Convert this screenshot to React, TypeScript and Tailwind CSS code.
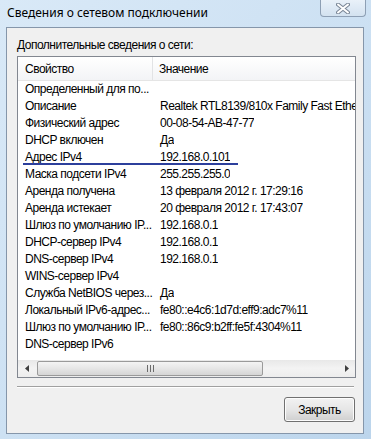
import React from "react";

const rows: [string, string][] = [
  ["Определенный для по...", ""],
  ["Описание", "Realtek RTL8139/810x Family Fast Ethernet NIC"],
  ["Физический адрес", "00-08-54-AB-47-77"],
  ["DHCP включен", "Да"],
  ["Адрес IPv4", "192.168.0.101"],
  ["Маска подсети IPv4", "255.255.255.0"],
  ["Аренда получена", "13 февраля 2012 г. 17:29:16"],
  ["Аренда истекает", "20 февраля 2012 г. 17:43:07"],
  ["Шлюз по умолчанию IP...", "192.168.0.1"],
  ["DHCP-сервер IPv4", "192.168.0.1"],
  ["DNS-сервер IPv4", "192.168.0.1"],
  ["WINS-сервер IPv4", ""],
  ["Служба NetBIOS через...", "Да"],
  ["Локальный IPv6-адрес...", "fe80::e4c6:1d7d:eff9:adc7%11"],
  ["Шлюз по умолчанию IP...", "fe80::86c9:b2ff:fe5f:4304%11"],
  ["DNS-сервер IPv6", ""],
];

const ui = { fontFamily: '"Liberation Sans", Arial, sans-serif' };

export default function App() {
  return (
    <div
      className="w-[371px] h-[439px] overflow-hidden flex flex-col bg-gradient-to-br from-[#d9e9f7] via-[#cde1f3] to-[#bcd5ec] text-[#1a1a1a]"
      style={ui}
    >
      {/* title bar */}
      <div className="h-[27px] flex items-start shrink-0">
        <div
          className="pl-[7px] pt-[4px] text-[12px] leading-[17px] text-black"
          style={{ fontFamily: '"Noto Sans", sans-serif' }}
        >
          Сведения о сетевом подключении
        </div>
        <div className="ml-auto mr-[5px] w-[46px] h-[17px] rounded-b-[4px] border border-t-0 border-[#8d9fb4] bg-gradient-to-b from-[#e9f1f9] to-[#d3e2f0] flex items-center justify-center">
          <svg width="14" height="11" viewBox="0 0 14 11">
            <path d="M2 1.5 L12 9.5 M12 1.5 L2 9.5" stroke="#7a8797" strokeWidth="4" strokeLinecap="round" />
            <path d="M2 1.5 L12 9.5 M12 1.5 L2 9.5" stroke="#ffffff" strokeWidth="2" strokeLinecap="round" />
          </svg>
        </div>
      </div>

      {/* client area */}
      <div className="ml-[6px] w-[358px] h-[407px] border border-[#8596aa] bg-[#f0f0f0] flex flex-col shrink-0 tracking-[-0.5px]">
        <div className="pl-[10px] pt-[9px] text-[12px] leading-[16px] text-black">
          Дополнительные сведения о сети:
        </div>
        <div className="ml-[10px] mt-[3px] w-[339px] h-[322px] border border-[#828790] bg-white flex flex-col overflow-hidden">
          {/* header */}
          <div className="h-[24px] shrink-0 flex border-b border-[#e5e5e5] bg-gradient-to-b from-white to-[#f3f4f6] text-[12px] text-black">
            <div className="w-[135px] shrink-0 pl-[7px] flex items-center border-r border-[#e2e3e5]">Свойство</div>
            <div className="pl-[6px] flex items-center">Значение</div>
          </div>
          {/* rows */}
          <div className="flex flex-col h-[279px] shrink-0">
            {rows.map(([k, v], i) => (
              <div key={i} className="relative h-[17px] flex items-center text-[12px] leading-[17px] text-black whitespace-nowrap">
                <div className="w-[135px] shrink-0 pl-[7px] overflow-hidden">{k}</div>
                <div className="pl-[7px] overflow-hidden">{v}</div>
                {i === 4 && (
                  <div className="absolute left-[5px] top-[14px] w-[215px] h-[2px] bg-[#2c3f9c]" />
                )}
              </div>
            ))}
          </div>
          {/* scrollbar */}
          <div className="h-[17px] shrink-0 flex bg-gradient-to-b from-[#e8e8e8] via-[#f3f3f3] to-[#ededed]">
            <div className="w-[17px] flex items-center justify-center">
              <svg width="4" height="7" viewBox="0 0 4 7"><path d="M4 0 L0 3.5 L4 7 Z" fill="#404040" /></svg>
            </div>
            <div className="w-[226px] my-[1px] ml-[2px] rounded-[2px] border border-[#9a9a9a] bg-gradient-to-b from-[#f4f4f4] via-[#e6e6e6] to-[#d5d5d5] flex items-center justify-center">
              <svg width="7" height="7" viewBox="0 0 7 7">
                <rect x="0" y="0" width="1" height="7" fill="#6b6b6b" />
                <rect x="3" y="0" width="1" height="7" fill="#6b6b6b" />
                <rect x="6" y="0" width="1" height="7" fill="#6b6b6b" />
              </svg>
            </div>
            <div className="ml-auto w-[17px] flex items-center justify-center">
              <svg width="4" height="7" viewBox="0 0 4 7"><path d="M0 0 L4 3.5 L0 7 Z" fill="#404040" /></svg>
            </div>
          </div>
        </div>
        {/* separator */}
        <div className="ml-[10px] mt-[8px] w-[337px] h-[2px] border-t border-[#a0a0a0] border-b border-b-white" />
        {/* button */}
        <div className="flex justify-end pr-[8px] mt-[9px]">
          <button className="w-[71px] h-[25px] rounded-[3px] border border-[#707070] bg-gradient-to-b from-[#f2f2f2] via-[#e6e6e6] to-[#cfcfcf] text-[12px] text-black flex items-center justify-center shadow-[inset_0_0_0_1px_#fcfcfc]">
            Закрыть
          </button>
        </div>
      </div>
    </div>
  );
}
